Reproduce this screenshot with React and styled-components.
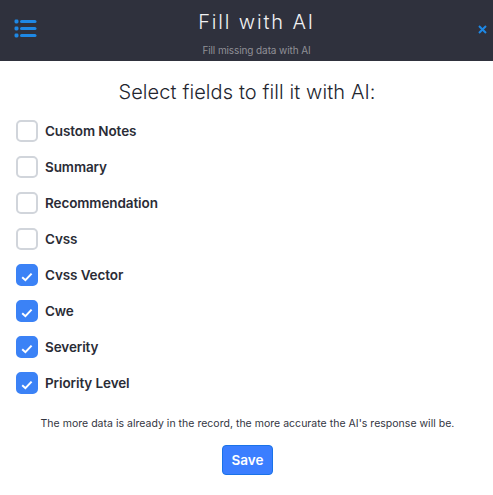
import React from "react";
import styled, { createGlobalStyle } from "styled-components";

const Global = createGlobalStyle`
  html, body { margin: 0; padding: 0; background: #fff; }
  body { font-family: "Inter", "Liberation Sans", sans-serif; }
`;

const Page = styled.div`
  width: 493px;
  height: 495px;
  display: flex;
  flex-direction: column;
  overflow: hidden;
`;

const Header = styled.header`
  height: 61px;
  flex: none;
  background: #2f313d;
  display: grid;
  grid-template-columns: 80px 1fr 60px;
`;

const MenuCell = styled.div`
  padding: 19px 0 0 14px;
`;

const TitleCell = styled.div`
  display: flex;
  flex-direction: column;
  align-items: center;
`;

const Title = styled.h1`
  margin: 9px 0 0;
  font-size: 20px;
  line-height: 26px;
  font-weight: 300;
  letter-spacing: 1.85px;
  color: #f1f1f3;
`;

const Subtitle = styled.div`
  margin-top: 9px;
  font-size: 10px;
  line-height: 13px;
  letter-spacing: -0.1px;
  color: #8f9097;
`;

const CloseCell = styled.div`
  display: flex;
  justify-content: flex-end;
  padding: 25px 6px 0 0;
`;

const Body = styled.main`
  flex: 1;
  display: flex;
  flex-direction: column;
`;

const Heading = styled.h2`
  margin: 18px 0 0;
  padding-left: 1px;
  text-align: center;
  font-size: 20px;
  line-height: 26px;
  font-weight: 300;
  letter-spacing: 0.1px;
  color: #23252e;
`;

const Fields = styled.div`
  margin-top: 15px;
  padding-left: 16px;
  display: flex;
  flex-direction: column;
  gap: 14px;
`;

const Row = styled.label`
  display: flex;
  align-items: center;
  gap: 7px;
  height: 22px;
`;

const Box = styled.span`
  width: 22px;
  height: 22px;
  box-sizing: border-box;
  border-radius: 5px;
  display: flex;
  align-items: center;
  justify-content: center;
  border: 2px solid ${(p) => (p.$on ? "#3b82f6" : "#d1d5db")};
  background: ${(p) => (p.$on ? "#3b82f6" : "#fff")};
`;

const Label = styled.span`
  font-size: 13.5px;
  font-weight: 600;
  letter-spacing: -0.1px;
  color: #2a2c36;
`;

const Note = styled.p`
  margin: 23px 0 0;
  padding-left: 2px;
  text-align: center;
  font-size: 10.5px;
  line-height: 14px;
  letter-spacing: 0.02px;
  color: #33353f;
`;

const Footer = styled.div`
  margin-top: 14px;
  padding-left: 2px;
  display: flex;
  justify-content: center;
`;

const Save = styled.button`
  width: 51px;
  height: 30px;
  padding: 0;
  border: 1px solid #1a73e8;
  border-radius: 4px;
  background: #3b7eff;
  color: #fff;
  font: 600 13.5px "Inter", "Liberation Sans", sans-serif;
`;

const MenuIcon = () => (
  <svg width="23" height="19" viewBox="0 0 23 19" fill="none" style={{ display: "block" }}>
    <g fill="#1e88e5">
      <rect x="0.5" y="0.5" width="4" height="4" rx="1.4" />
      <rect x="0.5" y="7.5" width="4" height="4" rx="1.4" />
      <rect x="0.5" y="14.5" width="4" height="4" rx="1.4" />
      <rect x="6" y="1" width="16.5" height="3" rx="1.5" />
      <rect x="6" y="8" width="16.5" height="3" rx="1.5" />
      <rect x="6" y="15" width="16.5" height="3" rx="1.5" />
    </g>
  </svg>
);

const CloseIcon = () => (
  <svg width="9" height="9" viewBox="0 0 9 9" fill="none" style={{ display: "block" }}>
    <path d="M1 1l7 7M8 1L1 8" stroke="#1e88e5" strokeWidth="2" />
  </svg>
);

const Check = () => (
  <svg width="12" height="10" viewBox="0 0 12 10" fill="none" style={{ display: "block", marginTop: 3 }}>
    <path d="M1.2 5.2L4.4 8.2L10.6 1.6" stroke="#fff" strokeWidth="2" />
  </svg>
);

const fields = [
  ["Custom Notes", false],
  ["Summary", false],
  ["Recommendation", false],
  ["Cvss", false],
  ["Cvss Vector", true],
  ["Cwe", true],
  ["Severity", true],
  ["Priority Level", true],
];

export default function App() {
  return (
    <Page>
      <Global />
      <Header>
        <MenuCell><MenuIcon /></MenuCell>
        <TitleCell>
          <Title>Fill with AI</Title>
          <Subtitle>Fill missing data with AI</Subtitle>
        </TitleCell>
        <CloseCell><CloseIcon /></CloseCell>
      </Header>
      <Body>
        <Heading>Select fields to fill it with AI:</Heading>
        <Fields>
          {fields.map(([name, on]) => (
            <Row key={name}>
              <Box $on={on}>{on && <Check />}</Box>
              <Label>{name}</Label>
            </Row>
          ))}
        </Fields>
        <Note>The more data is already in the record, the more accurate the AI's response will be.</Note>
        <Footer><Save>Save</Save></Footer>
      </Body>
    </Page>
  );
}
